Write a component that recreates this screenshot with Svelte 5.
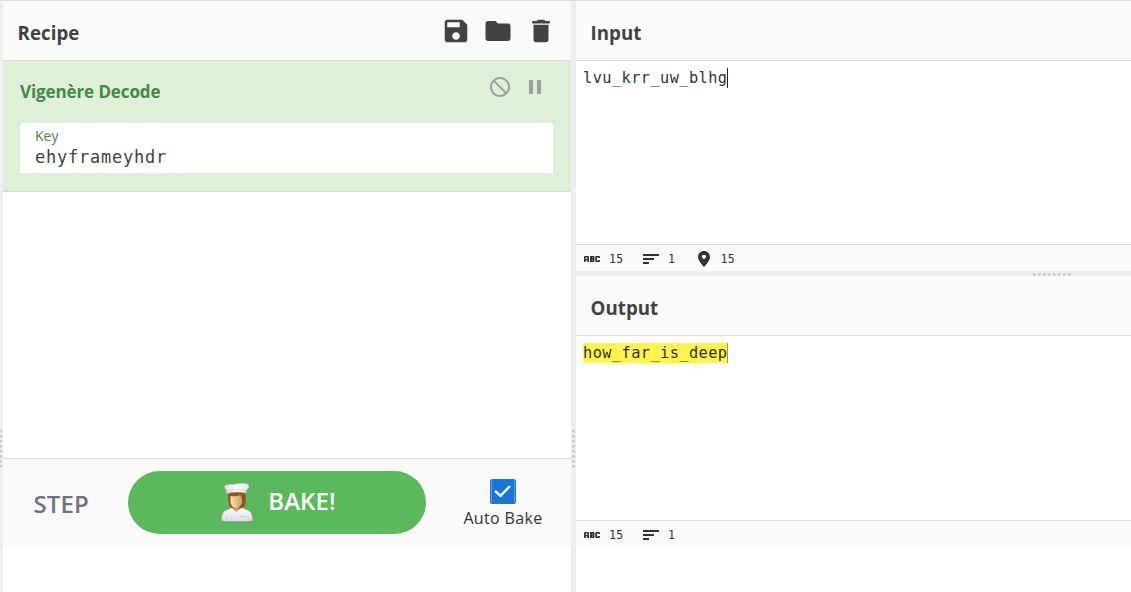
<script>
  let recipeKey = 'ehyframeyhdr';
  let input = 'lvu_krr_uw_blhg';
  let output = 'how_far_is_deep';
  const dots = Array.from({ length: 8 });
</script>

{#snippet grip(direction)}
  <span class="grip {direction}">{#each dots as _}<i></i>{/each}</span>
{/snippet}

{#snippet abc()}
  <svg class="abc" width="16" height="8" viewBox="0 0 16 8" fill="#333">
    <path fill-rule="evenodd" d="M0 7V2Q0 1 1 1H4Q5 1 5 2V7H3.300V5.500H1.700V7ZM1.700 2.500V4H3.300V2.500ZM6 1H9.500Q10.500 1 10.500 2V6Q10.500 7 9.500 7H6ZM8 2.500V3.300H8.700V2.500ZM8 4.700V5.500H8.700V4.700ZM11.300 2Q11.300 1 12.300 1H15Q16 1 16 2V3H14.200V2.500H13V5.500H14.200V5H16V6Q16 7 15 7H12.300Q11.300 7 11.300 6Z" />
  </svg>
{/snippet}

{#snippet lines()}
  <svg class="lines" width="16" height="10" viewBox="0 0 16 10" fill="#333">
    <path d="M0 0H16V2H0ZM0 4H11V6H0ZM0 8H6V10H0Z" />
  </svg>
{/snippet}

<div class="workspace">
  <div class="gutter left">{@render grip('vertical')}</div>
  <section class="recipe">
    <header>
      <h2>Recipe</h2>
      <div class="tools">
        <svg width="30" height="30" viewBox="0 0 24 24"><path d="M17 3H5c-1.11 0-2 .9-2 2v14c0 1.1.89 2 2 2h14c1.1 0 2-.9 2-2V7l-4-4zm-5 16c-1.66 0-3-1.34-3-3s1.34-3 3-3 3 1.34 3 3-1.34 3-3 3zm3-10H5V5h10v4z" /></svg>
        <svg width="30" height="30" viewBox="0 0 24 24"><path d="M10 4H4c-1.1 0-1.99.9-1.99 2L2 18c0 1.1.9 2 2 2h16c1.1 0 2-.9 2-2V8c0-1.1-.9-2-2-2h-8l-2-2z" /></svg>
        <svg width="30" height="30" viewBox="0 0 24 24"><path d="M6 19c0 1.1.9 2 2 2h8c1.1 0 2-.9 2-2V7H6v12zM19 4h-3.500l-1-1h-5l-1 1H5v2h14V4z" /></svg>
      </div>
    </header>
    <div class="operation">
      <div class="operation-head">
        <h3>Vigenère Decode</h3>
        <div class="operation-tools">
          <svg width="24" height="24" viewBox="0 0 24 24"><path d="M12 2C6.480 2 2 6.480 2 12s4.480 10 10 10 10-4.480 10-10S17.520 2 12 2zM4 12c0-4.420 3.580-8 8-8 1.850 0 3.550.63 4.900 1.690L5.690 16.900C4.630 15.550 4 13.850 4 12zm8 8c-1.850 0-3.550-.63-4.900-1.690L18.310 7.100C19.370 8.450 20 10.150 20 12c0 4.420-3.580 8-8 8z" transform="matrix(-1 0 0 1 24 0)" /></svg>
          <svg width="24" height="24" viewBox="0 0 24 24"><path d="M6 19h4V5H6v14zm8-14v14h4V5h-4z" /></svg>
        </div>
      </div>
      <div class="field">
        <span class="label">Key</span>
        <span class="value">{recipeKey}</span>
      </div>
    </div>
    <div class="space"></div>
    <footer>
      <span class="step">STEP</span>
      <div class="bake">
        <svg width="34" height="40" viewBox="0 0 34 40">
          <defs>
            <linearGradient id="coat" x1="0" y1="0" x2="0" y2="1"><stop offset="0" stop-color="#fff" /><stop offset="1" stop-color="#dcdce2" /></linearGradient>
            <linearGradient id="hat" x1="0" y1="0" x2="1" y2="0"><stop offset="0" stop-color="#dcdcda" /><stop offset=".45" stop-color="#fff" /><stop offset="1" stop-color="#e4e4e4" /></linearGradient>
            <linearGradient id="skin" x1="0" y1="0" x2="1" y2="0"><stop offset="0" stop-color="#ffe3a9" /><stop offset="1" stop-color="#d49c58" /></linearGradient>
          </defs>
          <path d="M2 38.600H32V39.500H2Z" fill="#36763a" opacity=".4" />
          <path d="M1.500 37Q1 28 8 26.500L13 24H21L26 26.500Q33 28 32.500 37Q32 38.500 29 38.500H5Q2 38.500 1.500 37Z" fill="url(#coat)" stroke="#9c9e9e" stroke-width=".6" />
          <path d="M12 21V25L16 29L21.500 25V21Z" fill="#d3a263" />
          <path d="M8.500 9Q7.500 17 9.500 23L12 25Q17 26 22 25L25 23Q26.500 15 25 9Z" fill="#94501f" />
          <path d="M10.500 13Q16 14 20.500 12Q23 16 21.500 21Q19 25.500 16 25.500Q12 24.500 10.500 20Z" fill="url(#skin)" />
          <path d="M6.500 10.500V7.500Q3 3 6 2Q10 1 14 1.500Q21-.5 27 1Q30 2 28.500 5L26 7.500V10Q16 8 6.500 10.500Z" fill="url(#hat)" stroke="#bfc2bd" stroke-width=".5" />
          <path d="M7 8Q16 5.500 26 7.500M19.500 33.500H27M6.500 34V38M28 34V38" fill="none" stroke="#c4c7c5" stroke-width=".7" />
        </svg>
        <span>BAKE!</span>
      </div>
      <div class="auto">
        <svg width="26" height="25" viewBox="0 0 26 25"><rect width="26" height="25" rx="2.500" fill="#1976d2" /><path d="M1.500 2V23M24.500 2V23" stroke="#5e9fe0" /><path d="M5 11.800L10.500 16.800L20 7" fill="none" stroke="#fff" stroke-width="2.400" /></svg>
        <span>Auto Bake</span>
      </div>
    </footer>
  </section>
  <div class="gutter middle">{@render grip('vertical')}</div>
  <div class="io">
    <section class="input">
      <header><h2>Input</h2></header>
      <div class="text"><span>{input}</span><b class="caret"></b></div>
      <div class="status">
        {@render abc()}<span class="count">15</span>
        {@render lines()}<span class="line-count">1</span>
        <svg class="pin" width="12" height="16" viewBox="0 0 12 16"><path fill="#333" fill-rule="evenodd" d="M6 0C2.700 0 0 2.600 0 5.900C0 10 6 16 6 16S12 10 12 5.900C12 2.600 9.300 0 6 0ZM6 3.700A2.100 2.100 0 1 1 6 7.900A2.100 2.100 0 0 1 6 3.700Z" /></svg>
        <span>15</span>
      </div>
    </section>
    <div class="divider">{@render grip('horizontal')}</div>
    <section class="output">
      <header><h2>Output</h2></header>
      <div class="text"><mark>{output}</mark></div>
      <div class="status">
        {@render abc()}<span class="count">15</span>
        {@render lines()}<span class="line-count">1</span>
      </div>
    </section>
  </div>
</div>

<style>
  :global(body) { overflow: hidden; background: #fff; }
  * { box-sizing: border-box; }
  svg { display: block; flex: none; }
  .workspace { display: grid; grid-template-columns: 3px 568px 5px 1fr; width: 100%; height: 592px; border-top: 1px solid #ddd; font-family: "Open Sans", "Noto Sans", sans-serif; color: #424242; }
  .gutter { background: #eee; padding-top: 429px; }
  .grip { display: flex; gap: 2px; }
  .vertical { flex-direction: column; width: 3px; margin-left: 1px; }
  .left .vertical { width: 2px; margin-left: 0; }
  .grip i { background: #ccc; flex: none; border: 0 solid #ddd; }
  .vertical i { height: 3px; border-bottom-width: 1px; }
  .horizontal i { width: 3px; height: 3px; border-right-width: 1px; }
  section { display: flex; flex-direction: column; }
  .recipe { height: 546px; }
  header { display: flex; align-items: center; justify-content: space-between; height: 60px; flex: none; background: #fafafa; border-bottom: 1px solid #ddd; padding: 4px 15px 0 14.500px; }
  h2, h3 { margin: 0; font-weight: 700; }
  h2 { font-size: 18.700px; line-height: 28px; letter-spacing: .05px; }
  .tools { display: flex; gap: 12.500px; fill: #424242; margin-top: -3px; }
  .tools svg:nth-child(2) { margin: 0 .7px 0 -.7px; }
  .operation { height: 131px; flex: none; background: #dff0d8; border-bottom: 1px solid #d0e6c3; padding: 14px 18px 0 17px; }
  .operation-head { display: flex; justify-content: space-between; height: 48px; }
  h3 { font-size: 17px; line-height: 34px; color: #468847; letter-spacing: -.1px; }
  .operation-tools { display: flex; gap: 11px; margin-right: 6.500px; fill: #9e9e9e; }
  .field { height: 50px; padding: 3px 15px 0; background: #fff; border-radius: 4px 4px 0 0; display: flex; flex-direction: column; }
  .label { font-size: 14px; line-height: 19px; color: #468847; }
  .value { font: 17px/25px "DejaVu Sans Mono", monospace; letter-spacing: .77px; color: #424242; }
  .space { flex: 1; }
  footer { display: flex; align-items: flex-start; height: 89px; flex: none; background: #fafafa; border-top: 1px solid #ddd; }
  .step { width: 125px; flex: none; padding: 27px 0 0 30.500px; font-size: 24px; line-height: 36px; font-weight: 600; color: #6c757d; letter-spacing: .1px; }
  .bake { width: 298px; flex: none; height: 63px; margin-top: 12px; border-radius: 32px; background: #5cb85c; color: #fff; display: flex; align-items: center; justify-content: center; gap: 14px; padding-left: 2px; font-size: 24px; font-weight: 600; }
  .bake span { letter-spacing: .1px; margin-top: -4px; }
  .auto { width: 154px; flex: none; display: flex; flex-direction: column; align-items: center; padding-top: 20px; font-size: 16px; line-height: 24px; color: #333; }
  .auto span { margin-top: 2px; letter-spacing: .35px; }
  .io { min-width: 0; }
  .input { height: 270px; }
  .output { height: 271px; }
  .divider { height: 5px; background: #eee; padding: 2px 0 0 457px; }
  .text { flex: 1; display: flex; align-items: flex-start; padding: 7px 8px 7px 7px; font: 15.300px/20px "DejaVu Sans Mono", monospace; letter-spacing: .42px; color: #333; }
  .text span { width: 145px; }
  .caret { width: 1px; height: 20px; background: #222; margin-left: -1px; }
  mark { background: #fff350; color: inherit; border-right: 1px solid #9a9a50; width: 145px; }
  .status { display: flex; align-items: center; height: 27px; flex: none; padding: 1px 8px 0; background: #fafafa; border-top: 1px solid #ddd; font: 11.500px/20px "DejaVu Sans Mono", monospace; letter-spacing: .4px; color: #333; }
  .abc { margin-right: 9px; }
  .count { width: 34px; }
  .lines { margin-right: 9px; }
  .line-count { width: 29.500px; }
  .pin { margin-right: 11px; }
</style>
